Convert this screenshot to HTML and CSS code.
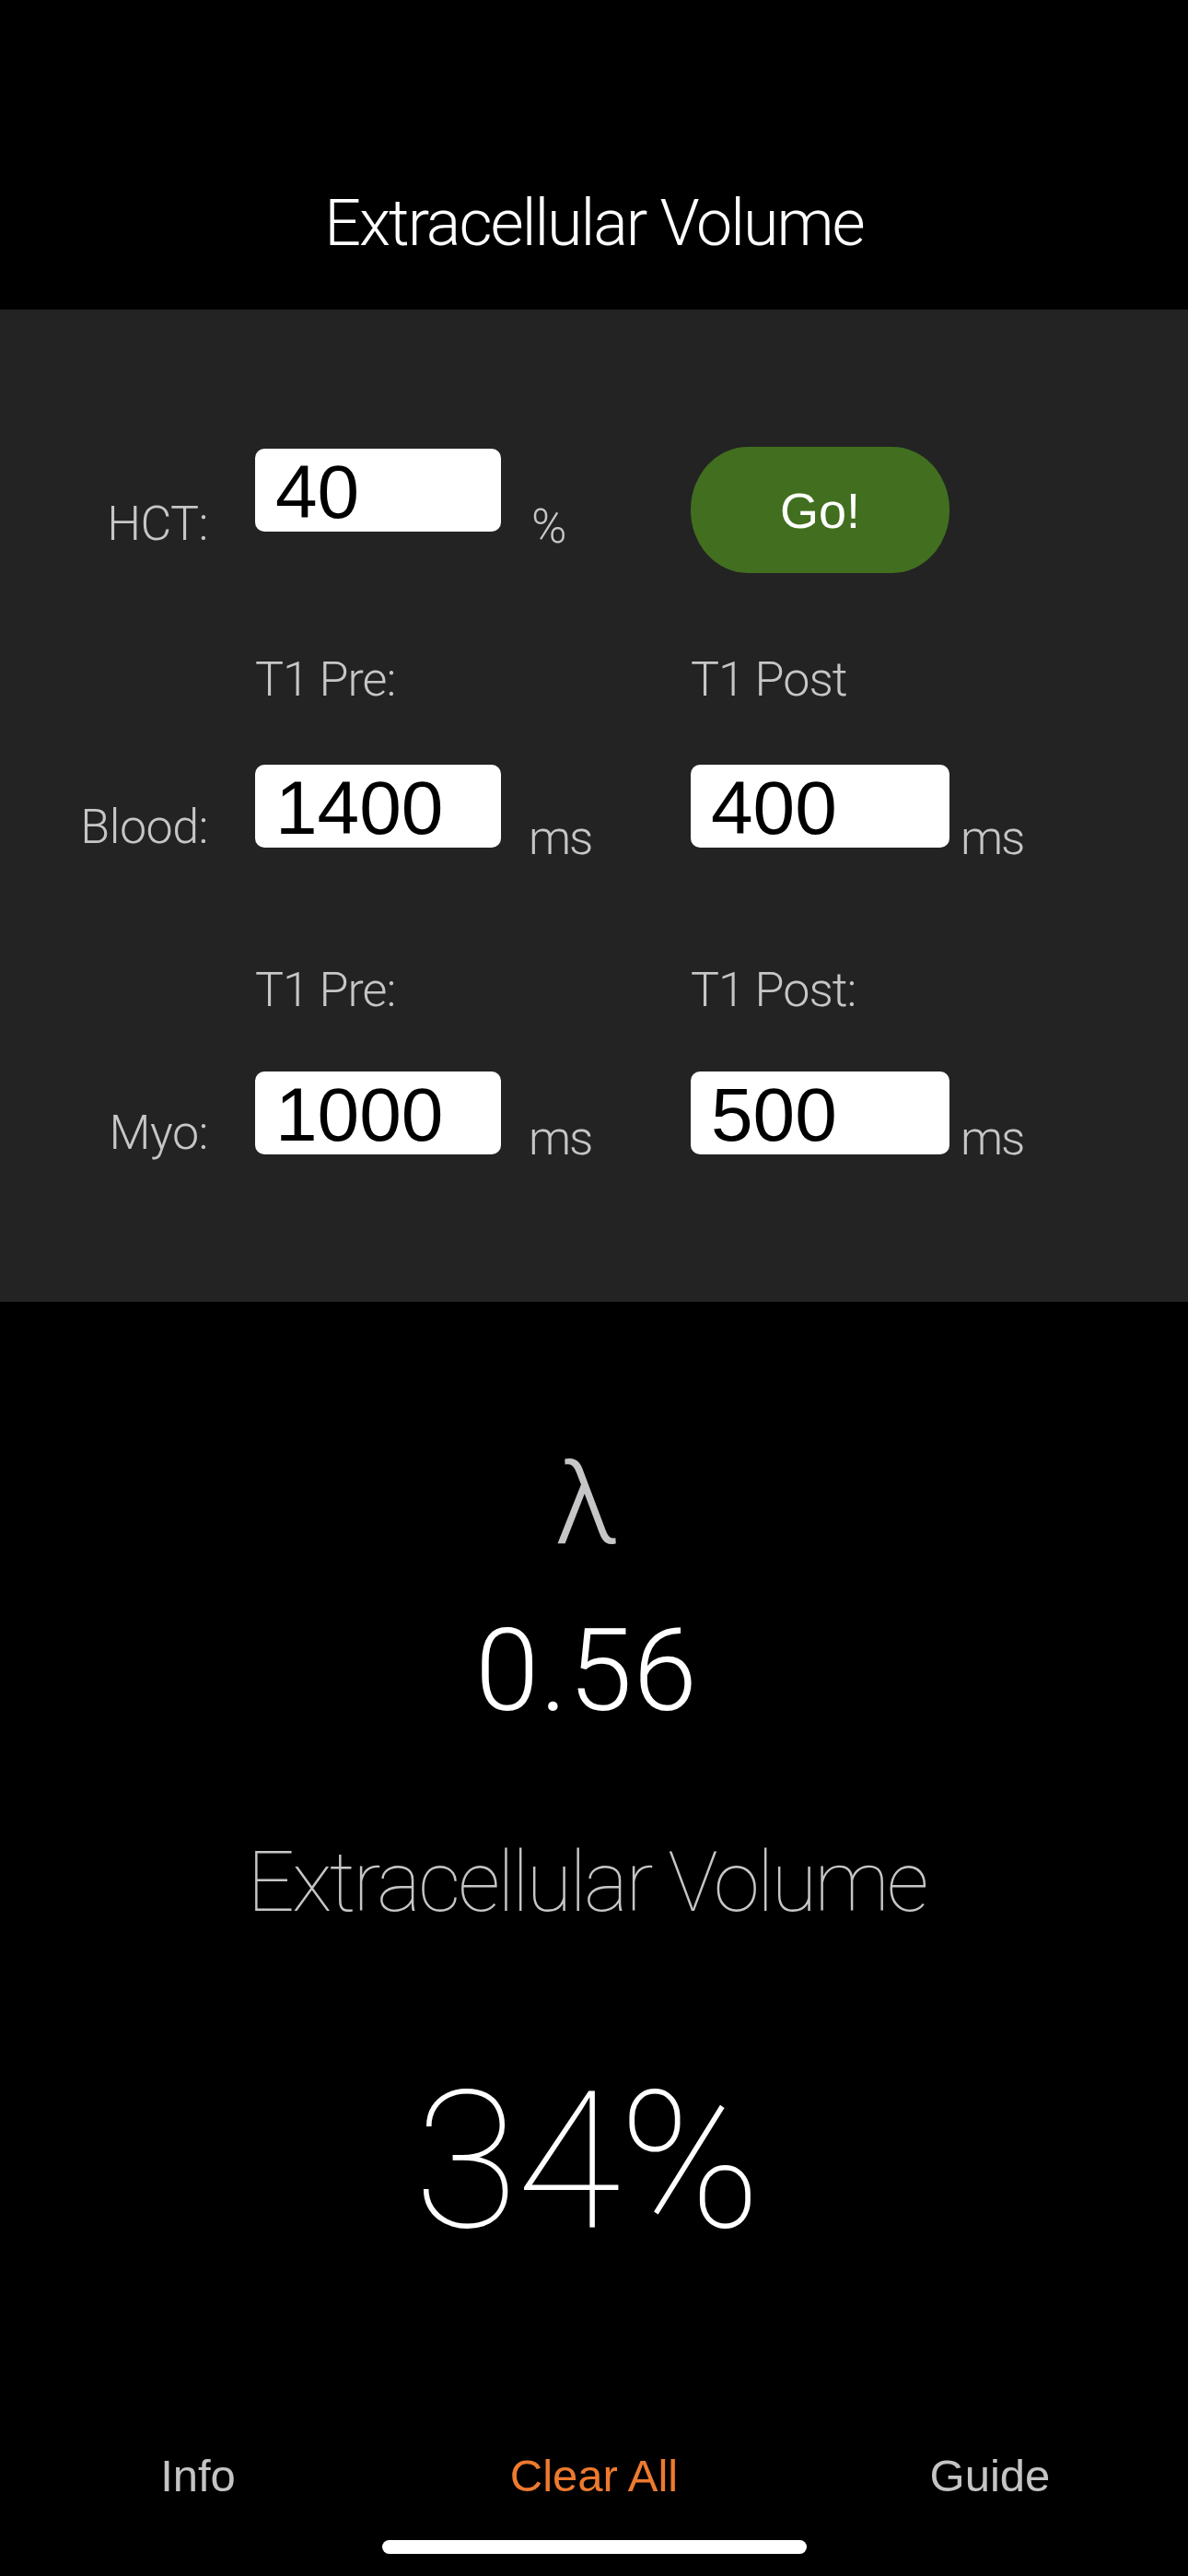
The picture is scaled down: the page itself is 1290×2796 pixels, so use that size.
FILE: index.html
```html
<!DOCTYPE html>
<html lang="en">
<head>
  <meta charset="UTF-8" />
  <meta name="viewport" content="width=device-width, initial-scale=1.0, user-scalable=no"/>
  <title>Extracellular Volume</title>
  <link rel="stylesheet" href="styles.css">
</head>
<body>

  <header class="top-bar">
    <h1>Extracellular Volume</h1>
  </header>

  <section class="inputs">
    <div class="row row-hct">
      <label class="row-label" for="hct">HCT:</label>
      <input class="field" id="hct" type="text" value="40" />
      <span class="unit unit-pct">%</span>
      <button class="go-btn" onclick="calculate()">Go!</button>
    </div>

    <div class="row row-heads">
      <span class="head col-a">T1 Pre:</span>
      <span class="head col-b">T1 Post</span>
    </div>

    <div class="row row-blood">
      <label class="row-label" for="bloodPre">Blood:</label>
      <input class="field" id="bloodPre" type="text" value="1400" />
      <span class="unit">ms</span>
      <input class="field field-wide" id="bloodPost" type="text" value="400" />
      <span class="unit unit-end">ms</span>
    </div>

    <div class="row row-heads row-heads-myo">
      <span class="head col-a">T1 Pre:</span>
      <span class="head col-b">T1 Post:</span>
    </div>

    <div class="row row-myo">
      <label class="row-label" for="myoPre">Myo:</label>
      <input class="field" id="myoPre" type="text" value="1000" />
      <span class="unit">ms</span>
      <input class="field field-wide" id="myoPost" type="text" value="500" />
      <span class="unit unit-end">ms</span>
    </div>
  </section>

  <section class="results">
    <div class="lambda-sign">λ</div>
    <div class="lambda-value" id="lambda">0.56</div>
    <div class="ecv-title">Extracellular Volume</div>
    <div class="ecv-value" id="ecv">34%</div>
  </section>

  <nav class="tab-bar">
    <a href="#" class="tab">Info</a>
    <a href="#" class="tab tab-active" onclick="clearAll()">Clear All</a>
    <a href="#" class="tab">Guide</a>
  </nav>
  <div class="home-indicator"></div>

  <script>
    function num(id) {
      return parseFloat(document.getElementById(id).value);
    }

    function calculate() {
      const hct = num('hct') / 100;
      const dBlood = 1 / num('bloodPost') - 1 / num('bloodPre');
      const dMyo = 1 / num('myoPost') - 1 / num('myoPre');
      const lambda = dMyo / dBlood;
      if (!isFinite(lambda)) return;
      document.getElementById('lambda').innerText = lambda.toFixed(2);
      document.getElementById('ecv').innerText = Math.round(lambda * (1 - hct) * 100) + '%';
    }

    function clearAll() {
      document.querySelectorAll('.field').forEach(f => f.value = '');
      document.getElementById('lambda').innerText = '';
      document.getElementById('ecv').innerText = '';
    }
  </script>

</body>
</html>
```

FILE: styles.css
```css
* { box-sizing: border-box; margin: 0; padding: 0; }
body {
  font-family: 'Roboto', 'Liberation Sans', sans-serif;
  background: #000;
  color: #fff;
  min-height: 100vh;
  display: flex;
  flex-direction: column;
}

.top-bar {
  height: 336px;
  padding-top: 207px;
  text-align: center;
}

.top-bar h1 {
  font-size: 70px;
  line-height: 70px;
  font-weight: 300;
  letter-spacing: -2px;
  color: #fff;
}

/* input panel */
.inputs {
  background: #232323;
  padding: 149px 0 151px;
  color: #c6c6c8;
}

.row {
  display: grid;
  grid-template-columns: 277px 267px 206px 281px 1fr;
  align-items: start;
}

.row-label {
  grid-column: 1;
  padding-right: 51px;
  text-align: right;
  font-size: 52px;
  line-height: 52px;
  font-weight: 300;
  letter-spacing: -0.5px;
}

.unit, .head {
  font-size: 52px;
  line-height: 52px;
  font-weight: 300;
  letter-spacing: -1px;
}

.unit { padding-left: 30px; letter-spacing: -2px; }
.unit-end { padding-left: 12px; }

.col-a { grid-column: 2; }
.col-b { grid-column: 4; }

.field {
  width: 267px;
  height: 90px;
  border: none;
  border-radius: 10px;
  background: #fff;
  color: #000;
  padding: 4px 0 0 22px;
  font-family: 'Liberation Sans', Arial, sans-serif;
  font-size: 82px;
  outline: none;
}

.field-wide { width: 281px; }

.go-btn {
  width: 281px;
  height: 137px;
  border: none;
  border-radius: 62px / 68px;
  background: #416f1f;
  color: #fff;
  font-family: 'Liberation Sans', Arial, sans-serif;
  font-size: 54px;
  cursor: pointer;
}

.row-hct .field { margin-top: 2px; }
.row-hct .row-label { margin-top: 58px; }
.row-hct .unit-pct { margin-top: 61px; padding-left: 33px; }

.row-heads { margin-top: 90px; }
.row-heads-myo { margin-top: 113px; }

.row-blood { margin-top: 66px; }
.row-blood .row-label { margin-top: 42px; }
.row-blood .unit { margin-top: 54px; }

.row-myo { margin-top: 62px; }
.row-myo .row-label { margin-top: 41px; }
.row-myo .unit { margin-top: 47px; }

/* results */
.results {
  flex: 1;
  text-align: center;
  padding-right: 16px;
}

.lambda-sign {
  margin-top: 157px;
  font-size: 125px;
  line-height: 125px;
  font-weight: 300;
  color: #c6c6c8;
}

.lambda-value {
  margin-top: 56px;
  font-size: 125px;
  line-height: 125px;
  font-weight: 300;
  letter-spacing: 1px;
}

.ecv-title {
  margin-top: 122px;
  font-size: 91px;
  line-height: 91px;
  font-weight: 100;
  letter-spacing: -3px;
  color: #c6c6c8;
}

.ecv-value {
  margin-top: 154px;
  font-size: 207px;
  line-height: 207px;
  font-weight: 100;
  letter-spacing: -2px;
}

/* bottom bar */
.tab-bar {
  display: grid;
  grid-template-columns: repeat(3, 1fr);
  text-align: center;
}

.tab {
  font-family: 'Liberation Sans', Arial, sans-serif;
  font-size: 49px;
  line-height: 49px;
  color: #c4c4c4;
  text-decoration: none;
}

.tab-active { color: #ed7a2f; }

.home-indicator {
  width: 461px;
  height: 15px;
  margin: 45px auto 24px;
  border-radius: 8px;
  background: #fff;
}
```
